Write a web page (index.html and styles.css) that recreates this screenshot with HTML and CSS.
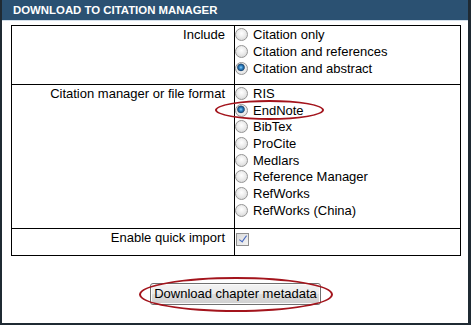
FILE: index.html
```html
<!DOCTYPE html>
<html>
<head>
<meta charset="utf-8">
<link rel="stylesheet" href="styles.css">
</head>
<body>
<div class="frame">
  <div class="header">DOWNLOAD TO CITATION MANAGER</div>
  <div class="grid">
    <div class="label row1">Include</div>
    <div class="opts row1">
      <label class="opt"><input type="radio" name="inc"><span>Citation only</span></label>
      <label class="opt"><input type="radio" name="inc"><span>Citation and references</span></label>
      <label class="opt"><input type="radio" name="inc" checked><span>Citation and abstract</span></label>
    </div>
    <div class="label row2">Citation manager or file format</div>
    <div class="opts row2">
      <label class="opt"><input type="radio" name="fmt"><span>RIS</span></label>
      <label class="opt"><input type="radio" name="fmt" checked><span>EndNote</span></label>
      <label class="opt"><input type="radio" name="fmt"><span>BibTex</span></label>
      <label class="opt"><input type="radio" name="fmt"><span>ProCite</span></label>
      <label class="opt"><input type="radio" name="fmt"><span>Medlars</span></label>
      <label class="opt"><input type="radio" name="fmt"><span>Reference Manager</span></label>
      <label class="opt"><input type="radio" name="fmt"><span>RefWorks</span></label>
      <label class="opt"><input type="radio" name="fmt"><span>RefWorks (China)</span></label>
    </div>
    <div class="label row3">Enable quick import</div>
    <div class="opts row3">
      <label class="opt"><input type="checkbox" checked></label>
    </div>
  </div>
  <div class="actions">
    <button class="btn" type="button">Download chapter metadata</button>
  </div>
  <div class="mark mark-endnote"></div>
  <div class="mark mark-button"></div>
</div>
</body>
</html>
```

FILE: styles.css
```css
html, body {
  margin: 0;
  padding: 0;
  background: #fff;
}
body {
  font-family: "Liberation Sans", Arial, sans-serif;
  font-size: 13px;
  color: #000;
}
.frame {
  position: relative;
  width: 471px;
  height: 325px;
  box-sizing: border-box;
  border-left: 2px solid #1f2a33;
  border-right: 3px solid #1f2a33;
  border-bottom: 2px solid #1f2a33;
  background: #fff;
}
.header {
  height: 20px;
  line-height: 21px;
  background: #2b5172;
  color: #fff;
  font-weight: bold;
  font-size: 11.4px;
  padding-left: 11px;
  border-bottom: 1px solid #d3dfea;
}
.grid {
  margin: 4px 0 0 9px;
  width: 450px;
  box-sizing: border-box;
  border: 1px solid #000;
  display: grid;
  grid-template-columns: 222px 1fr;
}
.label {
  text-align: right;
  padding-right: 9px;
  line-height: 17px;
  border-bottom: 1px solid #000;
}
.opts {
  border-left: 1px solid #000;
  border-bottom: 1px solid #000;
  padding-bottom: 8px;
}
.row1.label { height: 59px; box-sizing: border-box; }
.row1.opts { height: 59px; box-sizing: border-box; }
.row2.label { height: 144px; box-sizing: border-box; }
.row2.opts { height: 144px; box-sizing: border-box; padding-top: 0; }
.row3.label, .row3.opts {
  border-bottom: 0;
  height: 26px;
  box-sizing: border-box;
}
.opt {
  display: flex;
  align-items: center;
  height: 17px;
  line-height: 17px;
  white-space: nowrap;
}
.row2 .opt { height: 16.7px; }
.opt input {
  -webkit-appearance: none;
  appearance: none;
  width: 13px;
  height: 13px;
  margin: 0 5px 0 0;
  box-sizing: border-box;
  flex: none;
  position: relative;
}
.opt input[type=radio] {
  border-radius: 50%;
  border: 1px solid #959595;
  background: radial-gradient(circle at 50% 40%, #ffffff 0, #ececec 45%, #cfcfcf 100%);
}
.opt input[type=radio]:checked {
  background: radial-gradient(circle at 45% 40%, #8fd0f7 0, #2f86c9 1.6px, #1b4d7e 3.2px, #7d8f9d 3.8px, #efefef 4.2px, #d6d6d6 100%);
}
.opt input[type=checkbox] {
  margin-top: 3px;
  margin-left: 1px;
  border: 1px solid #8f8f8f;
  background: linear-gradient(135deg, #dadada 0%, #f4f4f4 100%);
}
.opt input[type=checkbox]:checked::after {
  content: "";
  position: absolute;
  left: 3.5px;
  top: 0.5px;
  width: 3px;
  height: 7px;
  border-right: 1.5px solid #4668c0;
  border-bottom: 1.5px solid #4668c0;
  transform: rotate(36deg);
}
.actions {
  display: flex;
  justify-content: center;
  padding-top: 27px;
  padding-left: 1px;
}
.btn {
  font-family: "Liberation Sans", Arial, sans-serif;
  font-size: 13px;
  color: #000;
  height: 22px;
  padding: 0 3px;
  border: 1px solid #707070;
  border-radius: 3px;
  background: linear-gradient(#f3f3f3 0%, #ebebeb 48%, #dddddd 52%, #cfcfcf 100%);
  box-shadow: inset 0 0 0 1px #fbfbfb;
  line-height: 20px;
}
.mark {
  position: absolute;
  box-sizing: border-box;
  border: 2px solid #a3141c;
  border-radius: 50%;
  pointer-events: none;
}
.mark-endnote {
  left: 213px;
  top: 100px;
  width: 109px;
  height: 20px;
}
.mark-button {
  left: 137px;
  top: 277px;
  width: 194px;
  height: 35px;
}
```
